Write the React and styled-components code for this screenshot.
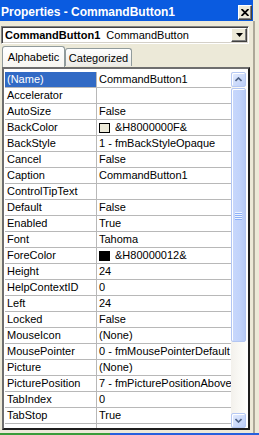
import React from "react";
import styled, { createGlobalStyle } from "styled-components";

const Global = createGlobalStyle`
  html, body { margin: 0; padding: 0; background: #ECE9D8; }
  #root { width: 259px; height: 435px; overflow: hidden; }
  * { box-sizing: border-box; }
`;

const Screen = styled.div`
  width: 259px;
  height: 435px;
  display: flex;
  flex-direction: column;
  background: #ECE9D8;
  font-family: "Liberation Sans", Arial, sans-serif;
  font-size: 11px;
  color: #000;
`;

const Frame = styled.div`
  display: flex;
  height: 433px;
`;

const Main = styled.div`
  width: 253px;
  display: flex;
  flex-direction: column;
`;

const Edge = styled.div`
  flex: 1;
  border-left: 2px solid #ACA899;
  margin-top: 21px;
`;

const TitleBar = styled.div`
  height: 21px;
  background: #0A5BE0;
  display: flex;
  align-items: flex-start;
  justify-content: space-between;
  padding: 0 1px 0 1px;
`;

const TitleText = styled.span`
  color: #fff;
  font-family: "Liberation Sans", Arial, sans-serif;
  font-weight: bold;
  font-size: 12px;
  line-height: 14px;
  padding-top: 5px;
  white-space: nowrap;
`;

const CloseButton = styled.div`
  width: 14px;
  height: 15px;
  margin-top: 5px;
  background: #ECE9D8;
  border: 1px solid;
  border-color: #fff #404040 #404040 #fff;
  box-shadow: inset -1px -1px #808080;
  display: flex;
  align-items: center;
  justify-content: center;
`;

const Combo = styled.div`
  margin: 5px 0 0 1px;
  width: 248px;
  height: 18px;
  background: #fff;
  border: 1px solid;
  border-color: #808080 #fff #fff #808080;
  box-shadow: inset 1px 1px #404040, inset -1px -1px #D4D0C8;
  display: flex;
  align-items: center;
  padding: 1px 1px 1px 3px;
`;

const ComboText = styled.div`
  flex: 1;
  white-space: nowrap;
  overflow: hidden;
  line-height: 14px;
`;

const ComboName = styled.b`
  font-weight: bold;
  margin-right: 6px;
`;

const DropButton = styled.div`
  width: 16px;
  height: 14px;
  background: #ECE9D8;
  border: 1px solid;
  border-color: #fff #404040 #404040 #fff;
  box-shadow: inset -1px -1px #808080;
  display: flex;
  align-items: center;
  justify-content: center;
`;

const TabStrip = styled.div`
  margin-top: 2px;
  height: 21px;
  display: flex;
  align-items: flex-end;
  padding-left: 2px;
`;

const Tab = styled.div`
  width: ${(p) => p.$w}px;
  height: ${(p) => (p.$active ? 21 : 18)}px;
  margin-bottom: ${(p) => (p.$active ? 0 : 1)}px;
  border: 1px solid #919B9C;
  border-bottom: none;
  border-radius: 3px 3px 0 0;
  background: ${(p) =>
    p.$active
      ? "linear-gradient(#FFFFFF, #F7F6F1)"
      : "linear-gradient(#FFFFFF, #ECEBE6)"};
  display: flex;
  align-items: center;
  justify-content: center;
  padding-top: ${(p) => (p.$active ? 0 : 1)}px;
  white-space: nowrap;
`;

const Grid = styled.div`
  margin-left: 2px;
  width: 248px;
  height: 363px;
  border: 2px solid;
  border-color: #6E6E6E #1E1E1E #1E1E1E #6E6E6E;
  background: #fff;
  display: flex;
  padding: 3px 2px 0 0;
  overflow: hidden;
`;

const Rows = styled.div`
  flex: 1;
  min-width: 0;
  padding-left: 1px;
  overflow: hidden;
`;

const Row = styled.div`
  display: flex;
  height: 16px;
  border-bottom: 1px solid #B8B8B8;
`;

const Label = styled.div`
  width: 92px;
  flex: none;
  border-right: 1px solid #B8B8B8;
  padding-left: 2px;
  line-height: 15px;
  white-space: nowrap;
  overflow: hidden;
  background: ${(p) => (p.$sel ? "#316AC5" : "#fff")};
  color: ${(p) => (p.$sel ? "#fff" : "#000")};
`;

const Value = styled.div`
  flex: 1;
  min-width: 0;
  padding-left: 2px;
  line-height: 15px;
  white-space: nowrap;
  overflow: hidden;
  display: flex;
  align-items: center;
`;

const Swatch = styled.span`
  width: 11px;
  height: 10px;
  border: 1px solid #000;
  background: ${(p) => p.$color};
  margin-right: 5px;
  flex: none;
`;

const ScrollBar = styled.div`
  width: 15px;
  flex: none;
  display: flex;
  flex-direction: column;
  background: linear-gradient(90deg, #F3F1EC, #FEFEFB);
  gap: 1px;
`;

const ScrollButton = styled.div`
  height: 15px;
  flex: none;
  border: 1px solid #B6C9F4;
  border-radius: 2px;
  background: linear-gradient(135deg, #E4ECFE, #BACDF8);
  box-shadow: inset 1px 1px #fff;
  display: flex;
  align-items: center;
  justify-content: center;
`;

const Thumb = styled.div`
  height: 254px;
  flex: none;
  border: 1px solid #B3C6F2;
  border-radius: 2px;
  background: linear-gradient(90deg, #C9D8FC, #C1D3FB 60%, #B6CAF7);
  box-shadow: inset 1px 1px #fff;
  display: flex;
  align-items: center;
  justify-content: center;
`;

const Track = styled.div`
  flex: 1;
`;

const Grip = styled.div`
  width: 7px;
  display: flex;
  flex-direction: column;
  gap: 1px;
`;

const GripLine = styled.div`
  height: 1px;
  background: #EEF4FE;
  box-shadow: 0 1px #8CB0F8;
`;

const TaskStrip = styled.div`
  height: 2px;
  display: flex;
`;

const StripPart = styled.div`
  width: ${(p) => p.$w};
  flex: ${(p) => (p.$grow ? 1 : "none")};
  background: ${(p) => p.$color};
`;

const rows = [
  ["(Name)", "CommandButton1"],
  ["Accelerator", ""],
  ["AutoSize", "False"],
  ["BackColor", "&H8000000F&", "#ECE9D8"],
  ["BackStyle", "1 - fmBackStyleOpaque"],
  ["Cancel", "False"],
  ["Caption", "CommandButton1"],
  ["ControlTipText", ""],
  ["Default", "False"],
  ["Enabled", "True"],
  ["Font", "Tahoma"],
  ["ForeColor", "&H80000012&", "#000000"],
  ["Height", "24"],
  ["HelpContextID", "0"],
  ["Left", "24"],
  ["Locked", "False"],
  ["MouseIcon", "(None)"],
  ["MousePointer", "0 - fmMousePointerDefault"],
  ["Picture", "(None)"],
  ["PicturePosition", "7 - fmPicturePositionAboveC"],
  ["TabIndex", "0"],
  ["TabStop", "True"],
  ["", ""],
];

const Arrow = ({ up }) => (
  <svg width="7" height="5" viewBox="0 0 7 5">
    <path
      d={up ? "M0.5 4 L3.5 1 L6.5 4" : "M0.5 1 L3.5 4 L6.5 1"}
      fill="none"
      stroke="#4D6185"
      strokeWidth="1.6"
    />
  </svg>
);

export default function App() {
  return (
    <>
      <Global />
      <Screen>
        <Frame>
          <Main>
            <TitleBar>
              <TitleText>Properties - CommandButton1</TitleText>
              <CloseButton>
                <svg width="8" height="7" viewBox="0 0 8 7">
                  <path d="M0.5 0 L7.5 7 M7.5 0 L0.5 7" stroke="#000" strokeWidth="1.8" />
                </svg>
              </CloseButton>
            </TitleBar>
            <Combo>
              <ComboText>
                <ComboName>CommandButton1</ComboName>CommandButton
              </ComboText>
              <DropButton>
                <svg width="7" height="4" viewBox="0 0 7 4">
                  <path d="M0 0 H7 L3.5 4 Z" fill="#000" />
                </svg>
              </DropButton>
            </Combo>
            <TabStrip>
              <Tab $active $w={63}>Alphabetic</Tab>
              <Tab $w={67}>Categorized</Tab>
            </TabStrip>
            <Grid>
              <Rows>
                {rows.map(([name, value, color], i) => (
                  <Row key={i}>
                    <Label $sel={i === 0}>{name}</Label>
                    <Value>
                      {color && <Swatch $color={color} />}
                      {value}
                    </Value>
                  </Row>
                ))}
              </Rows>
              <ScrollBar>
                <ScrollButton>
                  <Arrow up />
                </ScrollButton>
                <Thumb>
                  <Grip>
                    <GripLine />
                    <GripLine />
                    <GripLine />
                    <GripLine />
                  </Grip>
                </Thumb>
                <Track />
                <ScrollButton>
                  <Arrow />
                </ScrollButton>
              </ScrollBar>
            </Grid>
          </Main>
          <Edge />
        </Frame>
        <TaskStrip>
          <StripPart $w="110px" $color="#3A9B3A" />
          <StripPart $grow $color="#2660DD" />
        </TaskStrip>
      </Screen>
    </>
  );
}
